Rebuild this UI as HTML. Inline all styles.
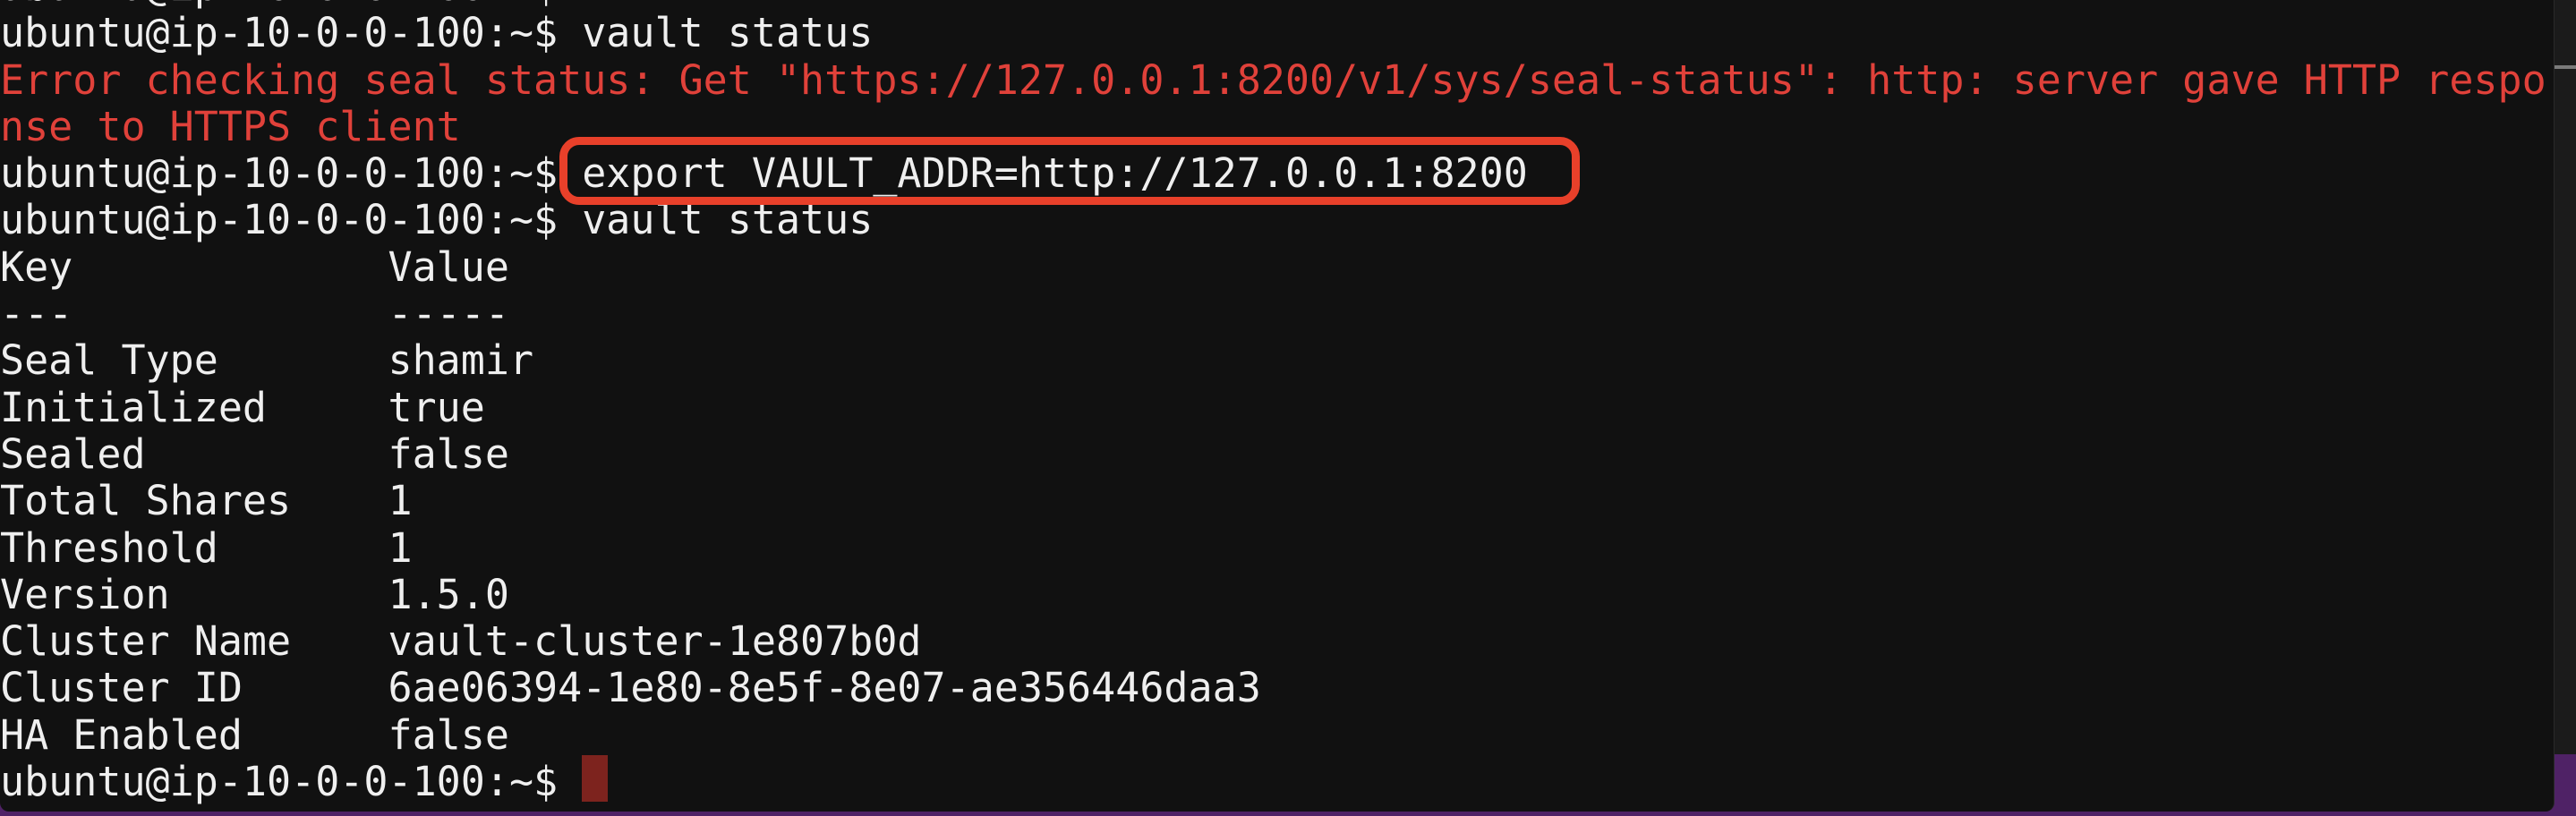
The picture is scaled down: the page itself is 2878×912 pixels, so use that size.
<!DOCTYPE html>
<html><head><meta charset="utf-8"><style>
html,body{margin:0;padding:0;}
body{width:2878px;height:912px;overflow:hidden;background:#1b1b1b;position:relative;}
#purple{position:absolute;left:0;top:843px;width:2878px;height:69px;background:#4f2266;}
#bar{position:absolute;left:2854px;top:73px;width:24px;height:4px;background:#7a7a7a;}
#term{position:absolute;left:0;top:0;width:2853px;height:907px;background:#111111;border-right:1px solid #2a2a2a;border-bottom-right-radius:10px;border-bottom-left-radius:10px;overflow:hidden;}
pre{margin:0;position:absolute;left:0;top:-41px;font-family:"DejaVu Sans Mono","Liberation Mono",monospace;font-size:45px;line-height:52.3px;color:#efefef;white-space:pre;}
.r{color:#e0413a;}
.cur{display:inline-block;width:29px;height:52px;background:#7d231e;vertical-align:top;margin-top:-4px;}
#box{position:absolute;left:625px;top:153px;width:1140px;height:76px;box-sizing:border-box;border:9px solid #e8402a;border-radius:22px;}
</style></head><body>
<div id="purple"></div><div id="bar"></div>
<div id="term">
<pre>ubuntu@ip-10-0-0-100:~$
ubuntu@ip-10-0-0-100:~$ vault status
<span class="r">Error checking seal status: Get "https://127.0.0.1:8200/v1/sys/seal-status": http: server gave HTTP respo</span>
<span class="r">nse to HTTPS client</span>
ubuntu@ip-10-0-0-100:~$ export VAULT_ADDR=http://127.0.0.1:8200
ubuntu@ip-10-0-0-100:~$ vault status
Key             Value
---             -----
Seal Type       shamir
Initialized     true
Sealed          false
Total Shares    1
Threshold       1
Version         1.5.0
Cluster Name    vault-cluster-1e807b0d
Cluster ID      6ae06394-1e80-8e5f-8e07-ae356446daa3
HA Enabled      false
ubuntu@ip-10-0-0-100:~$ <span class="cur"></span></pre>
<div id="box"></div>
</div>
</body></html>
